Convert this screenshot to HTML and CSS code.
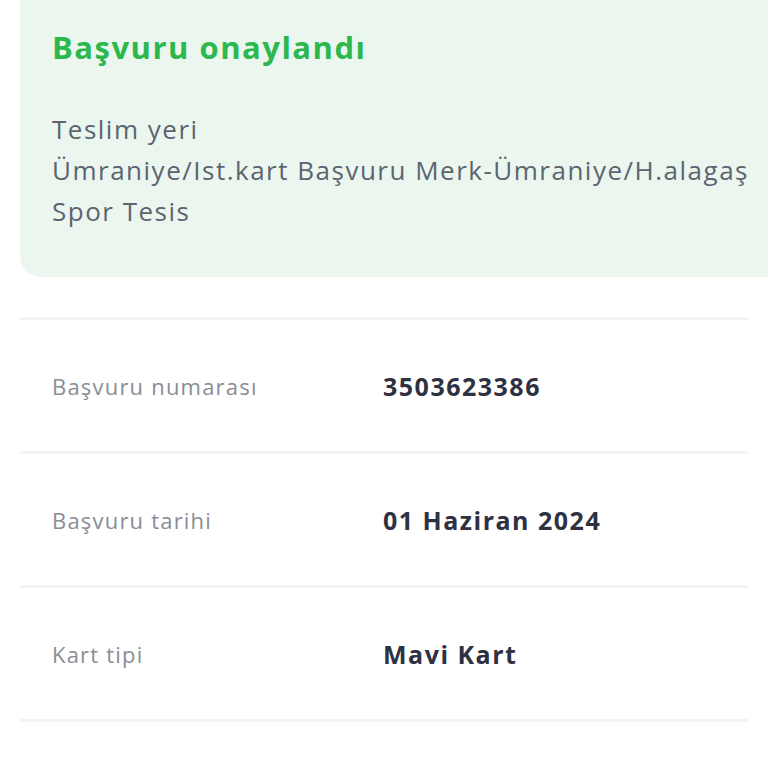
FILE: index.html
```html
<!DOCTYPE html>
<html lang="tr">
  <head>
    <meta charset="UTF-8" />
    <meta name="viewport" content="width=device-width, initial-scale=1.0" />
    <title>Başvuru Detayı</title>
    <link rel="stylesheet" href="styles.css">
  </head>
  <body>
    <div class="page">
      <!-- Status Card -->
      <div class="status-card">
        <div class="status-title">Başvuru onaylandı</div>
        <div class="status-text">
          Teslim yeri<br />
          Ümraniye/Ist.kart Başvuru Merk-Ümraniye/H.alagaş<br />
          Spor Tesis
        </div>
      </div>

      <!-- Detail Rows -->
      <div class="details">
        <div class="detail-row">
          <div class="detail-label">Başvuru numarası</div>
          <div class="detail-value">3503623386</div>
        </div>
        <div class="detail-row">
          <div class="detail-label">Başvuru tarihi</div>
          <div class="detail-value">01 Haziran 2024</div>
        </div>
        <div class="detail-row">
          <div class="detail-label">Kart tipi</div>
          <div class="detail-value">Mavi Kart</div>
        </div>
      </div>
    </div>
  </body>
</html>
```

FILE: styles.css
```css
body {
  font-family: "Open Sans", "Noto Sans", sans-serif;
  background-color: #ffffff;
  margin: 0;
  padding: 0;
  overflow: hidden;
}

.page {
  padding-left: 20px;
  padding-right: 20px;
}

.status-card {
  background-color: #ebf7ee;
  border-radius: 0 0 0 22px;
  margin-right: -40px;
  padding: 26px 32px 45px 32px;
}

.status-title {
  font-size: 31px;
  font-weight: bold;
  letter-spacing: 1.5px;
  color: #2db84f;
  line-height: 42px;
  margin-bottom: 41px;
}

.status-text {
  font-size: 26px;
  letter-spacing: 1.5px;
  color: #5b6470;
  line-height: 41px;
  white-space: nowrap;
}

.details {
  margin-top: 40px;
  border-top: 3px solid #f3f3f3;
}

.detail-row {
  display: flex;
  align-items: center;
  height: 131px;
  padding-left: 32px;
  border-bottom: 3px solid #f3f3f3;
}

.detail-label {
  width: 331px;
  font-size: 22px;
  letter-spacing: 1.2px;
  color: #8a8d94;
}

.detail-value {
  font-size: 25px;
  font-weight: bold;
  letter-spacing: 1.5px;
  color: #2e3142;
}
```
